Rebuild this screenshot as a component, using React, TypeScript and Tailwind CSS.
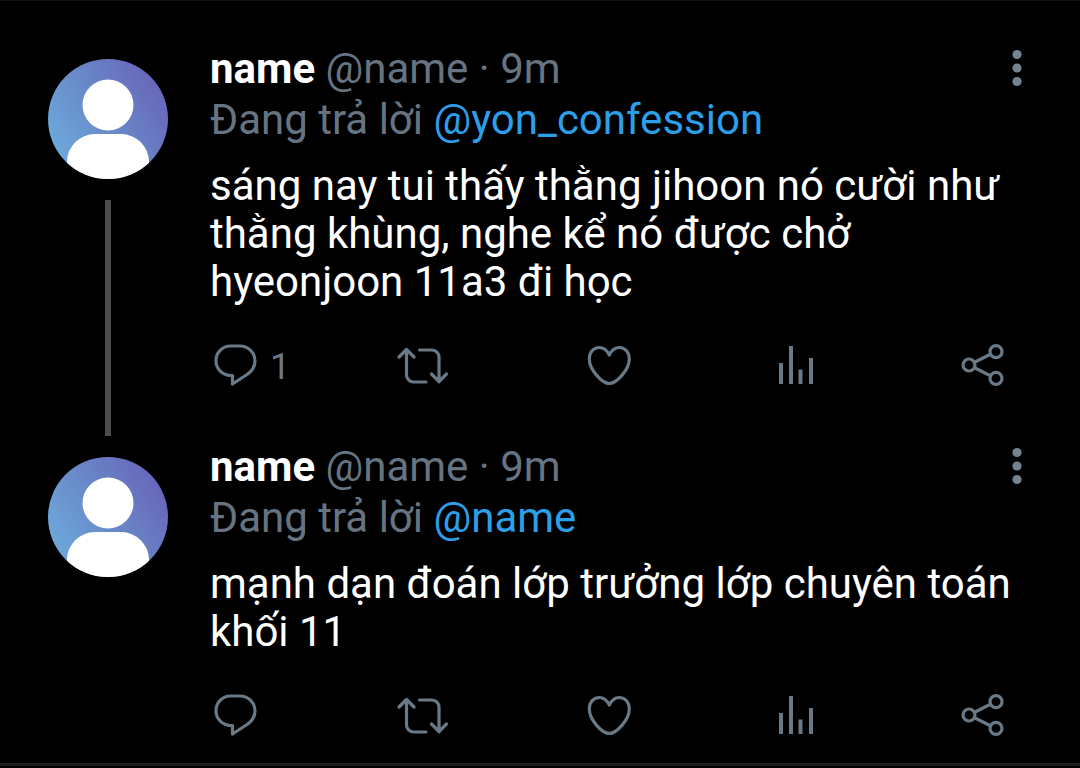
import { useId } from "react";
import type { ReactNode } from "react";

interface Tweet {
  id: number;
  name: string;
  handle: string;
  time: string;
  replyingTo: string;
  text: string;
  replies?: number;
}

const tweets: Tweet[] = [
  {
    id: 1,
    name: "name",
    handle: "@name",
    time: "9m",
    replyingTo: "@yon_confession",
    text: "sáng nay tui thấy thằng jihoon nó cười như thằng khùng, nghe kể nó được chở hyeonjoon 11a3 đi học",
    replies: 1,
  },
  {
    id: 2,
    name: "name",
    handle: "@name",
    time: "9m",
    replyingTo: "@name",
    text: "mạnh dạn đoán lớp trưởng lớp chuyên toán khối 11",
  },
];

/* ---------- icons ---------- */
const Icon = ({ children }: { children: ReactNode }) => (
  <svg
    viewBox="0 0 48 48"
    className="size-12 shrink-0 overflow-visible"
    fill="none"
    stroke="currentColor"
    strokeWidth="3.2"
    aria-hidden="true"
  >
    {children}
  </svg>
);

const ReplyIcon = () => (
  <Icon>
    <path
      d="M18.500 5H28a15 15 0 0 1 15 15c0 6-3 10-8 13.500L20.500 43V34.500H18.500A14.700 14.700 0 0 1 4 20 14.700 14.700 0 0 1 18.500 5Z"
      strokeLinejoin="round"
    />
  </Icon>
);

const RetweetIcon = () => (
  <Icon>
    <path
      d="M7.500 9v25a7 7 0 0 0 7 7H27M0 16l7.500-7.500L15 16M20.500 9H33a7 7 0 0 1 7 7v25M32.500 33l7.500 7.500 7.500-7.500"
      strokeLinecap="round"
      strokeLinejoin="round"
    />
  </Icon>
);

const HeartIcon = () => (
  <Icon>
    <path
      d="M23.300 14C20.800 9 17.300 6.500 13.300 6.500 7.300 6.500 3.300 11.500 3.300 18c0 11 13 24.500 20 24.500s20-13.500 20-24.500c0-6.500-4-11.500-10-11.500-4 0-7.500 2.500-10 7.500Z"
      strokeLinejoin="round"
    />
  </Icon>
);

const StatsIcon = () => (
  <Icon>
    <path d="M9 22v21M19 5v38M28.500 28.500V43M39 17v26" strokeWidth="4" />
  </Icon>
);

const ShareIcon = () => (
  <Icon>
    <circle cx="10" cy="24" r="6" />
    <circle cx="37" cy="10.700" r="6" />
    <circle cx="37" cy="37.300" r="6" />
    <path d="m15.500 21.300 16-8M15.500 26.700l16 8" />
  </Icon>
);

const MoreIcon = () => (
  <svg viewBox="0 0 10 38" className="h-[38px] w-2.5" fill="currentColor" aria-hidden="true">
    <circle cx="5" cy="5.500" r="4.600" />
    <circle cx="5" cy="19" r="4.600" />
    <circle cx="5" cy="32.500" r="4.600" />
  </svg>
);

const Avatar = () => {
  const id = useId();
  return (
    <svg viewBox="0 0 120 120" className="size-30 shrink-0" role="img" aria-label="Avatar">
      <defs>
        <linearGradient id={`${id}-bg`} x1="0.02" y1="0.78" x2="0.9" y2="0.22">
          <stop offset="0" stopColor="#6dabdc" />
          <stop offset="0.5" stopColor="#698ac9" />
          <stop offset="1" stopColor="#6868bb" />
        </linearGradient>
        <clipPath id={`${id}-clip`}>
          <circle cx="60" cy="60" r="60" />
        </clipPath>
      </defs>
      <g clipPath={`url(#${id}-clip)`}>
        <rect width="120" height="120" fill={`url(#${id}-bg)`} />
        <circle cx="60" cy="46" r="25.500" fill="#fff" />
        <rect x="19" y="75" width="82" height="70" rx="28" fill="#fff" />
      </g>
    </svg>
  );
};

/* ---------- tweet ---------- */
const actionClass = "flex flex-1 items-center gap-2.5 text-left cursor-pointer";

const TweetItem = ({ tweet, threaded }: { tweet: Tweet; threaded: boolean }) => (
  <article className="flex">
    {/* avatar and thread line */}
    <div className="flex w-[210px] shrink-0 flex-col pl-12 pt-4">
      <Avatar />
      {threaded && (
        <div className="ml-[57px] mt-[21px] mb-[5px] w-1.5 flex-1 bg-[#4b4b4b]" />
      )}
    </div>

    <div className={`min-w-0 flex-1 ${threaded ? "pb-[52px]" : "pb-6"}`}>
      <header className="flex items-start justify-between">
        <div className="leading-[51px] text-[#667482]">
          <p>
            <span className="font-bold text-white">{tweet.name}</span>{" "}
            {tweet.handle} · {tweet.time}
          </p>
          <p>
            Đang trả lời{" "}
            <a href="#" className="text-[#2d9fe8]">
              {tweet.replyingTo}
            </a>
          </p>
        </div>
        <button
          aria-label="More"
          className="flex h-[50px] w-3.5 cursor-pointer items-center justify-center text-[#738390]"
        >
          <MoreIcon />
        </button>
      </header>

      <p className="mt-[17px] leading-12 text-white">{tweet.text}</p>

      <div className="mt-[35px] flex pl-0.5 pr-[17px] text-[#697985]">
        <button aria-label="Reply" className={actionClass}>
          <ReplyIcon />
          {tweet.replies && <span className="pt-1 text-4xl leading-11">{tweet.replies}</span>}
        </button>
        <button aria-label="Retweet" className={actionClass}>
          <RetweetIcon />
        </button>
        <button aria-label="Like" className={actionClass}>
          <HeartIcon />
        </button>
        <button aria-label="Stats" className={actionClass}>
          <StatsIcon />
        </button>
        <button aria-label="Share" className="cursor-pointer">
          <ShareIcon />
        </button>
      </div>
    </div>
  </article>
);

const App = () => {
  return (
    <div className="min-h-screen bg-black font-['Roboto',sans-serif] text-[42px]">
      <main className="border-t border-b-3 border-t-[#101010] border-b-[#1e1e1e] pr-14 pt-[42px]">
        {tweets.map((tweet, i) => (
          <TweetItem key={tweet.id} tweet={tweet} threaded={i < tweets.length - 1} />
        ))}
      </main>
    </div>
  );
};

export default App;
